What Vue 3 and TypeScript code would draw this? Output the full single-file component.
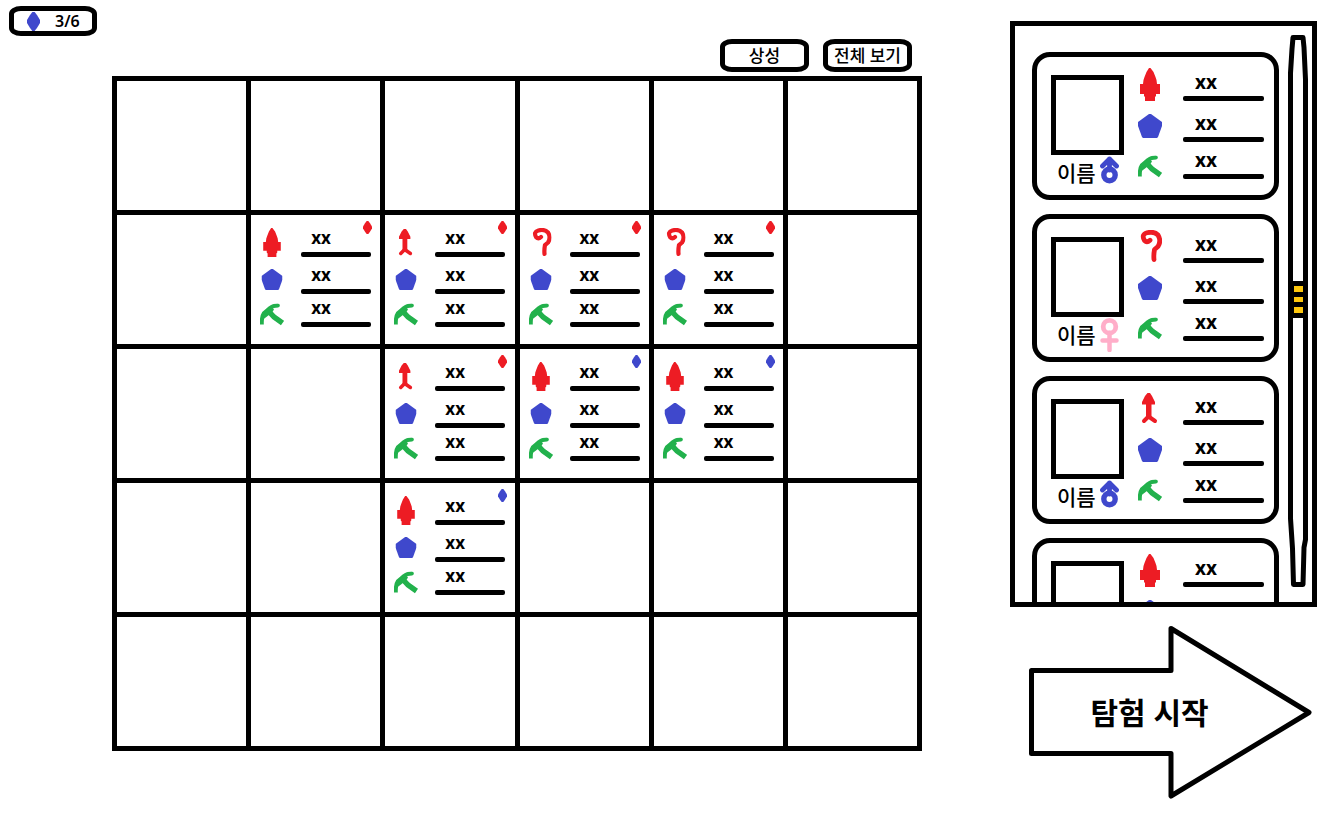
<script setup lang="ts">
type Weapon = 'spear' | 'arrow' | 'staff'
type Team = 'red' | 'blue'
type Gender = 'male' | 'female'

interface Unit {
  weapon: Weapon
  team: Team
}

interface Member {
  name: string
  gender: Gender
  weapon: Weapon
}

const columns = 6
const rows = 5

const placed: Record<string, Unit> = {
  '1-1': { weapon: 'spear', team: 'red' },
  '1-2': { weapon: 'arrow', team: 'red' },
  '1-3': { weapon: 'staff', team: 'red' },
  '1-4': { weapon: 'staff', team: 'red' },
  '2-2': { weapon: 'arrow', team: 'red' },
  '2-3': { weapon: 'spear', team: 'blue' },
  '2-4': { weapon: 'spear', team: 'blue' },
  '3-2': { weapon: 'spear', team: 'blue' },
}

const cells = Array.from({ length: rows * columns }, (_, i) => {
  const key = `${Math.floor(i / columns)}-${i % columns}`
  return { key, unit: placed[key] as Unit | undefined }
})

const members: Member[] = [
  { name: '이름', gender: 'male', weapon: 'spear' },
  { name: '이름', gender: 'female', weapon: 'staff' },
  { name: '이름', gender: 'male', weapon: 'arrow' },
  { name: '이름', gender: 'male', weapon: 'spear' },
]

const statsFor = (weapon: Weapon) => [
  { kind: 'weapon', icon: weapon, box: '0 0 24 33', value: 'xx' },
  { kind: 'armor', icon: 'armor', box: '0 0 24 24', value: 'xx' },
  { kind: 'tool', icon: 'tool', box: '0 0 24 23', value: 'xx' },
]
</script>

<template>
  <div class="page">
    <svg class="sprite" aria-hidden="true">
      <symbol id="spear" viewBox="0 0 24 33">
        <path fill="#ed1c24" d="M11 0h1.500l3 4 2 5 1 3 .5 4h3v10h-4v2l-1 1v4H7v-4l-1-1v-2H2V16h3l.5-4 1-3 2-5z" />
      </symbol>
      <symbol id="arrow" viewBox="0 0 24 33">
        <path fill="#ed1c24" d="M9.500 1h2.500l2 3 3 6v2.500h-3.500V25H8V12.500H4V10l3-6z" />
        <path fill="none" stroke="#ed1c24" stroke-width="4" stroke-linecap="round" stroke-linejoin="round" d="M6 29l4.500-4.500L17 29" />
      </symbol>
      <symbol id="staff" viewBox="0 0 24 33">
        <path fill="none" stroke="#ed1c24" stroke-width="4.800" stroke-linecap="round" stroke-linejoin="round" d="M12 10.200Q9 13 6.500 10.500Q3 4.500 9 2.800Q16 1 20 5Q23.500 11 20 16.500L16.500 19.500Q15.500 25 16 29.500" />
      </symbol>
      <symbol id="armor" viewBox="0 0 24 24">
        <path fill="#3f48cc" d="M11 0h2l11 8v4l-4 11-1 1H5l-1-1L0 12V8z" />
      </symbol>
      <symbol id="tool" viewBox="0 0 24 23">
        <path fill="none" stroke="#22b14c" stroke-width="4" stroke-linejoin="round" d="M1.800 21Q1.500 13 4 9.500Q8 6.500 10 4.500Q13 2 17.500 2" />
        <circle cx="17.800" cy="2" r="2" fill="#22b14c" />
        <path fill="none" stroke="#22b14c" stroke-width="5.400" d="M8 7l6 6.500 8.500 6" />
        <path fill="#22b14c" d="M6 6l5-3 3 3-2 3-5 4-4 3z" />
      </symbol>
      <symbol id="male" viewBox="0 0 19 28">
        <path fill="none" stroke="#3f48cc" stroke-width="4.800" stroke-linecap="round" stroke-linejoin="round" d="M2.500 10l7-7 7 7M9.500 3v11" />
        <circle cx="9.500" cy="19" r="5.700" fill="none" stroke="#3f48cc" stroke-width="5.400" />
      </symbol>
      <symbol id="female" viewBox="0 0 19 34">
        <circle cx="9.500" cy="8.700" r="6.300" fill="none" stroke="#ffaec9" stroke-width="4.800" />
        <path fill="none" stroke="#ffaec9" stroke-width="4.500" stroke-linecap="round" d="M9.500 15v17M2.500 22.500h14" />
      </symbol>
      <symbol id="gem" viewBox="0 0 9 13" preserveAspectRatio="none">
        <path fill="currentColor" d="M3.700 0h1.600L7 2.300l2 3.200v2l-2 3.200L5.300 13H3.700L2 10.700 0 7.500v-2l2-3.200z" />
      </symbol>
    </svg>

    <main class="field">
      <div class="counter">
        <svg class="counter-gem blue" aria-hidden="true"><use href="#gem" /></svg>
        <span>3/6</span>
      </div>

      <div class="toolbar">
        <button type="button" class="pill">상성</button>
        <button type="button" class="pill">전체 보기</button>
      </div>

      <div class="board">
        <div v-for="cell in cells" :key="cell.key" class="cell">
          <template v-if="cell.unit">
            <svg class="gem" :class="cell.unit.team" aria-hidden="true"><use href="#gem" /></svg>
            <ul class="stats">
              <li v-for="s in statsFor(cell.unit.weapon)" :key="s.kind" :class="s.kind">
                <svg class="icon" :viewBox="s.box" aria-hidden="true"><use :href="`#${s.icon}`" /></svg>
                <span class="value">{{ s.value }}</span>
              </li>
            </ul>
          </template>
        </div>
      </div>
    </main>

    <aside class="side">
      <section class="panel">
        <ul class="roster">
          <li v-for="(m, i) in members" :key="i" class="card">
            <div class="profile">
              <div class="portrait"></div>
              <div class="name">
                <span>{{ m.name }}</span>
                <svg :class="m.gender" aria-hidden="true"><use :href="`#${m.gender}`" /></svg>
              </div>
            </div>
            <ul class="stats large">
              <li v-for="s in statsFor(m.weapon)" :key="s.kind" :class="s.kind">
                <svg class="icon" :viewBox="s.box" aria-hidden="true"><use :href="`#${s.icon}`" /></svg>
                <span class="value">{{ s.value }}</span>
              </li>
            </ul>
          </li>
        </ul>
        <svg class="scrollbar" viewBox="0 0 20 552" aria-hidden="true">
          <path fill="none" stroke="#000" stroke-width="5" stroke-linejoin="round" d="M5 2.500h10l1 10 1.500 32v460l-1.500 8-1 37H5.500l-1-36-2-30V38l1.500-24z" />
          <rect x="4" y="246" width="12" height="37" />
          <path fill="#ffc90e" d="M6 251h9v6H6zM6 262h9v5H6zM6 272h9v6H6z" />
        </svg>
      </section>

      <button type="button" class="start">
        <svg viewBox="0 0 283 173" aria-hidden="true">
          <path fill="#fff" stroke="#000" stroke-width="5" stroke-linejoin="round" d="M2.500 44.500H142V2.500l138 84-138 83.500v-42.500H2.500z" />
        </svg>
        <span>탐험 시작</span>
      </button>
    </aside>
  </div>
</template>

<style>
body {
  margin: 0;
  background: #fff;
}
</style>

<style scoped>
.page {
  display: flex;
  align-items: flex-start;
  gap: 88px;
  padding: 6px 19px 24px 9px;
  color: #000;
  font-family: "Noto Sans", "Noto Sans CJK KR", sans-serif;
  font-weight: 600;
}

.sprite {
  position: absolute;
  width: 0;
  height: 0;
}

ul {
  margin: 0;
  padding: 0;
  list-style: none;
}

button {
  padding: 0;
  border: 0;
  background: none;
  color: inherit;
  font: inherit;
  cursor: pointer;
}

.red {
  color: #ed1c24;
}

.blue {
  color: #3f48cc;
}

.field {
  flex: 1;
  min-width: 0;
}

.counter {
  display: flex;
  align-items: center;
  gap: 15px;
  box-sizing: border-box;
  width: 88px;
  height: 30px;
  padding-left: 13px;
  border: 5px solid #000;
  border-radius: 12px / 8px;
  font-size: 16px;
  line-height: 20px;
}

.counter-gem {
  width: 13px;
  height: 19px;
}

.toolbar {
  display: flex;
  justify-content: flex-end;
  gap: 14px;
  margin: 3px 10px 4px 0;
}

.pill {
  box-sizing: border-box;
  width: 89px;
  height: 33px;
  border: 5px solid #000;
  border-radius: 12px / 8px;
  background: #fff;
  font-size: 17px;
  font-weight: 500;
  line-height: 20px;
  white-space: nowrap;
}

.board {
  display: grid;
  grid-template-columns: repeat(6, 1fr);
  grid-auto-rows: 129px;
  gap: 5px;
  margin-left: 103px;
  border: 5px solid #000;
  background: #000;
}

.cell {
  position: relative;
  background: #fff;
}

.gem {
  position: absolute;
  top: 6px;
  right: 8px;
  width: 9px;
  height: 13px;
}

.stats li {
  display: flex;
  align-items: flex-end;
  gap: 17px;
  height: 37px;
}

.cell .stats {
  padding-left: 9px;
}

.stats .weapon {
  height: 42px;
}

.stats .tool {
  height: 33px;
}

.icon {
  flex: none;
  width: 24px;
  height: 24px;
}

.weapon .icon {
  height: 29px;
}

.armor .icon {
  height: 21px;
  margin-bottom: 4px;
}

.value {
  width: 70px;
  padding-left: 10px;
  box-sizing: border-box;
  font-size: 17px;
  font-weight: 700;
  line-height: 18px;
}

.value::after {
  content: "";
  display: block;
  height: 5px;
  margin: 5px 0 0 -10px;
  border-radius: 2px;
  background: #000;
}

.side {
  flex: none;
  width: 307px;
  padding-top: 15px;
}

.panel {
  display: flex;
  justify-content: space-between;
  border: 5px solid #000;
}

.roster {
  height: 550px;
  padding: 26px 0 0 17px;
  overflow-y: auto;
  scrollbar-width: none;
}

.card {
  display: flex;
  gap: 14px;
  box-sizing: border-box;
  width: 247px;
  height: 148px;
  margin-bottom: 14px;
  padding-left: 14px;
  border: 5px solid #000;
  border-radius: 18px;
}

.profile {
  padding-top: 18px;
}

.portrait {
  box-sizing: border-box;
  width: 73px;
  height: 80px;
  border: 5px solid #000;
}

.name {
  display: flex;
  gap: 4px;
  padding-left: 6px;
  font-size: 21px;
  font-weight: 500;
  line-height: 36px;
  white-space: nowrap;
}

.name svg {
  flex: none;
  width: 19px;
  height: 34px;
  margin-top: 1px;
}

.name .male {
  height: 28px;
}

.large li {
  gap: 21px;
}

.large .weapon {
  height: 44px;
}

.large .armor {
  height: 41px;
}

.large .tool {
  height: 37px;
}

.large .weapon .icon {
  height: 33px;
}

.large .armor .icon {
  height: 24px;
}

.large .value {
  width: 81px;
  padding-left: 12px;
  font-size: 19px;
  line-height: 20px;
}

.large .value::after {
  margin: 4px 0 0 -12px;
}

.scrollbar {
  width: 20px;
  height: 552px;
  margin: 9px 4px 0 0;
}

.start {
  display: grid;
  align-items: center;
  width: 283px;
  margin: 19px 0 0 19px;
  font-size: 30px;
  font-weight: 700;
  line-height: 36px;
}

.start svg,
.start span {
  grid-area: 1 / 1;
}

.start svg {
  display: block;
  width: 100%;
}

.start span {
  padding-right: 42px;
}
</style>
